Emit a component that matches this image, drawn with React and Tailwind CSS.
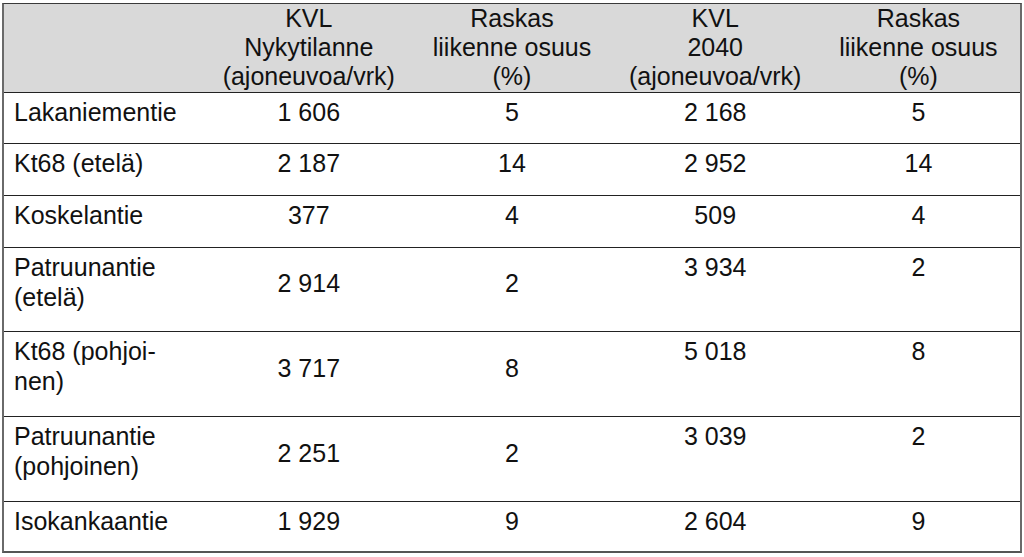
const HEAD = [
  ['', '', ''],
  ['KVL', 'Nykytilanne', '(ajoneuvoa/vrk)'],
  ['Raskas', 'liikenne osuus', '(%)'],
  ['KVL', '2040', '(ajoneuvoa/vrk)'],
  ['Raskas', 'liikenne osuus', '(%)'],
]

const ROWS = [
  { name: ['Lakaniementie'], now: '1 606', heavy: '5', kvl40: '2 168', heavy40: '5', h: 'h-[51px]' },
  { name: ['Kt68 (etelä)'], now: '2 187', heavy: '14', kvl40: '2 952', heavy40: '14', h: 'h-[52px]' },
  { name: ['Koskelantie'], now: '377', heavy: '4', kvl40: '509', heavy40: '4', h: 'h-[52px]' },
  { name: ['Patruunantie', '(etelä)'], now: '2 914', heavy: '2', kvl40: '3 934', heavy40: '2', h: 'h-[84px]' },
  { name: ['Kt68 (pohjoi-', 'nen)'], now: '3 717', heavy: '8', kvl40: '5 018', heavy40: '8', h: 'h-[85px]' },
  { name: ['Patruunantie', '(pohjoinen)'], now: '2 251', heavy: '2', kvl40: '3 039', heavy40: '2', h: 'h-[85px]' },
  { name: ['Isokankaantie'], now: '1 929', heavy: '9', kvl40: '2 604', heavy40: '9', h: 'h-[49px]', last: true },
]

export default function App() {
  return (
    <div
      className="w-[1024px] h-[557px] overflow-hidden bg-white pt-[3px] pl-[2px] text-[25px] leading-[29px] text-[#111]"
      style={{ fontFamily: '"Liberation Sans", Arial, sans-serif' }}
    >
      <div className="w-[1020px] border-t border-t-[#3a3a3a] border-l-2 border-r-2 border-l-[#6a6a6a] border-r-[#6a6a6a] border-b-2 border-b-[#555]">
        {/* Header */}
        <div className="grid grid-cols-5 h-[89px] bg-[#d9d9d9] border-b border-[#222]">
          {HEAD.map((lines, i) => (
            <div key={i} className="flex flex-col items-center text-center">
              {lines.map((l, j) => (
                <span key={j} className="whitespace-nowrap">{l}</span>
              ))}
            </div>
          ))}
        </div>

        {/* Body */}
        {ROWS.map((r, i) => (
          <div
            key={i}
            className={`grid grid-cols-5 leading-[30px] ${r.h} ${r.last ? '' : 'border-b border-[#222]'}`}
          >
            <div className="pl-[10px] pt-1 pb-[17px] flex flex-col">
              {r.name.map((n, j) => (
                <span key={j} className="whitespace-nowrap">{n}</span>
              ))}
            </div>
            <div className="pt-1 pb-[17px] flex items-center justify-center">{r.now}</div>
            <div className="pt-1 pb-[17px] flex items-center justify-center">{r.heavy}</div>
            <div className="pt-1 pb-[17px] text-center">{r.kvl40}</div>
            <div className="pt-1 pb-[17px] text-center">{r.heavy40}</div>
          </div>
        ))}
      </div>
    </div>
  )
}
